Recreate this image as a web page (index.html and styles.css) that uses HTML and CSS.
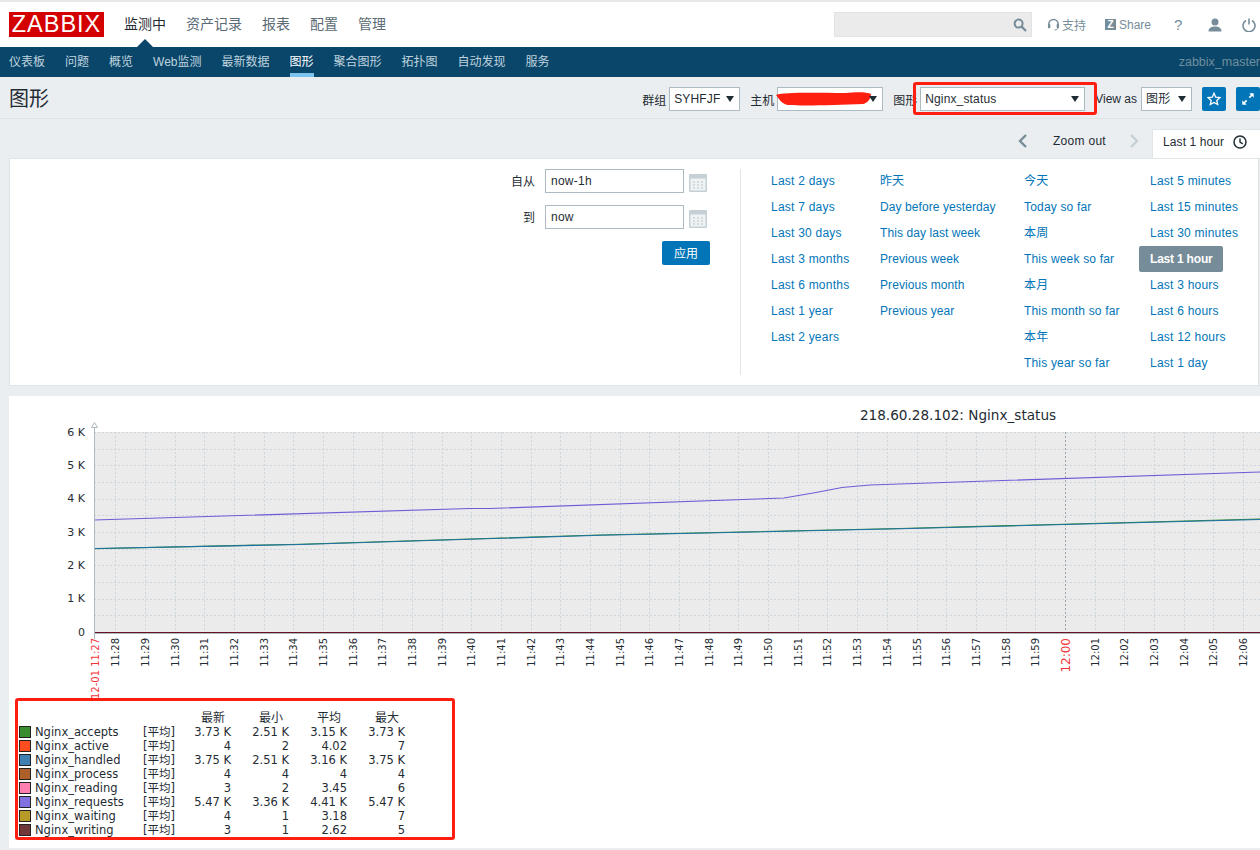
FILE: index.html
```html
<!DOCTYPE html>
<html lang="zh">
<head>
<meta charset="utf-8">
<title>图形</title>
<link rel="stylesheet" href="styles.css">
</head>
<body>
<header class="topbar">
  <div class="logo">ZABBIX</div>
  <nav class="mainmenu">
    <a class="active">监测中</a><a>资产记录</a><a>报表</a><a>配置</a><a>管理</a>
  </nav>
  <div class="search">
    <svg class="icon14" viewBox="0 0 14 14"><circle cx="5.6" cy="5.6" r="4" fill="none" stroke="#768d99" stroke-width="2"/><path d="M8.6 8.6l4.4 4.4" stroke="#768d99" stroke-width="2.2"/></svg>
  </div>
  <div class="tools">
    <span class="tool t-support"><svg class="icon13" viewBox="0 0 14 14"><path d="M2 9V6.500a5 5 0 0 1 10 0V9" fill="none" stroke="#768d99" stroke-width="1.600"/><rect x="1" y="6.500" width="2.600" height="4.500" rx="1" fill="#768d99"/><rect x="10.400" y="6.500" width="2.600" height="4.500" rx="1" fill="#768d99"/><path d="M11.500 11c0 1.300-1.500 1.800-3.500 1.800" fill="none" stroke="#768d99"/></svg>支持</span>
    <span class="tool t-share"><span class="zbadge">Z</span>Share</span>
    <span class="tool t-help">?</span>
    <svg class="icon14 t-user" viewBox="0 0 14 14"><circle cx="7" cy="4" r="3.500" fill="#768d99"/><path d="M0.500 13.500c0-3.500 2.500-5 6.500-5s6.500 1.500 6.500 5z" fill="#768d99"/></svg>
    <svg class="icon14 t-power" viewBox="0 0 14 14"><path d="M4 2.500a6 6 0 1 0 6 0" fill="none" stroke="#768d99" stroke-width="1.600"/><path d="M7 0.500v6" stroke="#768d99" stroke-width="1.600"/></svg>
  </div>
</header>

<nav class="submenu">
  <a>仪表板</a><a>问题</a><a>概览</a><a>Web监测</a><a>最新数据</a><a class="active">图形</a><a>聚合图形</a><a>拓扑图</a><a>自动发现</a><a>服务</a>
  <span class="server">zabbix_master</span>
</nav>

<section class="titlebar">
  <h1>图形</h1>
  <div class="controls">
    <label>群组</label>
    <div class="select s-group">SYHFJF</div>
    <label class="l-next">主机</label>
    <div class="select s-host"><svg class="redact" viewBox="0 0 96 14" preserveAspectRatio="none"><path d="M0 3 C8 0 40 1 70 1 C82 0 92 0 96 2 C96 6 93 11 88 12 C60 13 30 14 12 13 C6 12 3 7 0 3z" fill="#ff1f10"/></svg></div>
    <label class="l-next">图形</label>
    <div class="select s-graph">Nginx_status<span class="annotation"></span></div>
    <label class="l-view">View as</label>
    <div class="select s-view">图形</div>
    <button class="iconbtn b-star"><svg viewBox="0 0 16 16"><path d="M8 1.500l2 4.400 4.700.500-3.500 3.200 1 4.700L8 11.900l-4.200 2.400 1-4.700L1.300 6.400 6 5.900z" fill="none" stroke="#fff" stroke-width="1.500"/></svg></button>
    <button class="iconbtn b-full"><svg viewBox="0 0 16 16"><path d="M9.500 1.500h5v5l-1.800-1.800-2.500 2.500-1.400-1.400 2.500-2.500zM6.500 14.500h-5v-5l1.800 1.800 2.500-2.500 1.400 1.400-2.500 2.500z" fill="#fff"/></svg></button>
  </div>
</section>

<section class="timeline">
  <svg class="chev" viewBox="0 0 12 16"><path d="M9 2L3 8l6 6" fill="none" stroke="#768d99" stroke-width="2.400"/></svg>
  <span class="zoomout">Zoom out</span>
  <svg class="chev chev-off" viewBox="0 0 12 16"><path d="M3 2l6 6-6 6" fill="none" stroke="#c5cfd5" stroke-width="2.400"/></svg>
  <div class="tab">Last 1 hour
    <svg class="clock" viewBox="0 0 14 14"><circle cx="7" cy="7" r="6" fill="none" stroke="#1f2c33" stroke-width="1.500"/><path d="M7 3.500V7l2.800 1.800" fill="none" stroke="#1f2c33" stroke-width="1.400"/></svg>
  </div>
</section>

<section class="filter">
  <form class="dates">
    <label>自从</label>
    <div class="input">now-1h</div>
    <svg class="cal" viewBox="0 0 18 18"><rect width="18" height="18" rx="1" fill="#c5d0d6"/><rect x="1.500" y="4.500" width="15" height="12" fill="#f0f3f4"/><path d="M4 8h2M8 8h2M12 8h2M4 11h2M8 11h2M12 11h2M4 14h2M8 14h2M12 14h2" stroke="#b6c3ca"/></svg>
    <label>到</label>
    <div class="input">now</div>
    <svg class="cal" viewBox="0 0 18 18"><rect width="18" height="18" rx="1" fill="#c5d0d6"/><rect x="1.500" y="4.500" width="15" height="12" fill="#f0f3f4"/><path d="M4 8h2M8 8h2M12 8h2M4 11h2M8 11h2M12 11h2M4 14h2M8 14h2M12 14h2" stroke="#b6c3ca"/></svg>
    <button class="apply" type="button">应用</button>
  </form>
  <div class="ranges">
    <ul class="c1"><li>Last 2 days</li><li>Last 7 days</li><li>Last 30 days</li><li>Last 3 months</li><li>Last 6 months</li><li>Last 1 year</li><li>Last 2 years</li></ul>
    <ul class="c2"><li>昨天</li><li>Day before yesterday</li><li>This day last week</li><li>Previous week</li><li>Previous month</li><li>Previous year</li></ul>
    <ul class="c3"><li>今天</li><li>Today so far</li><li>本周</li><li>This week so far</li><li>本月</li><li>This month so far</li><li>本年</li><li>This year so far</li></ul>
    <ul class="c4"><li>Last 5 minutes</li><li>Last 15 minutes</li><li>Last 30 minutes</li><li class="selected">Last 1 hour</li><li>Last 3 hours</li><li>Last 6 hours</li><li>Last 12 hours</li><li>Last 1 day</li></ul>
  </div>
</section>

<section class="graph">
  <svg class="plot" viewBox="9 396 1251 302" width="1251" height="302">
    <text class="g-title" x="958" y="420" text-anchor="middle">218.60.28.102: Nginx_status</text>
    <rect x="94" y="432" width="1166" height="200" fill="#ebebeb"/>
    <path class="grid" d="M94 432.500H1260M94 449.500H1260M94 465.500H1260M94 482.500H1260M94 499.500H1260M94 515.500H1260M94 532.500H1260M94 549.500H1260M94 565.500H1260M94 582.500H1260M94 599.500H1260M94 615.500H1260"/>
    <path class="grid" d="M115.500 432V632M145.500 432V632M175.500 432V632M204.500 432V632M234.500 432V632M264.500 432V632M293.500 432V632M323.500 432V632M353.500 432V632M382.500 432V632M412.500 432V632M442.500 432V632M471.500 432V632M501.500 432V632M531.500 432V632M560.500 432V632M590.500 432V632M620.500 432V632M649.500 432V632M679.500 432V632M709.500 432V632M738.500 432V632M768.500 432V632M798.500 432V632M827.500 432V632M857.500 432V632M887.500 432V632M917.500 432V632M946.500 432V632M976.500 432V632M1006.500 432V632M1035.500 432V632M1095.500 432V632M1124.500 432V632M1154.500 432V632M1184.500 432V632M1213.500 432V632M1243.500 432V632"/>
    <path class="grid-major" d="M1065.500 432V632"/>
    <polyline class="l-requests" points="94,520 470,508.500 490,508.500 784,498 816,492.500 842,487.500 870,485 1260,472"/>
    <polyline class="l-accepts" points="94,548.700 300,544.200 600,535 900,528.500 1260,519"/>
    <polyline class="l-handled" points="94,548.500 300,544.500 600,535.300 900,528.800 1260,519.500"/>
    <path class="l-zero" d="M94 632.500H1260"/>
    <path class="axis" d="M94.500 425V639M94 633.500H1260"/>
    <path class="arrow" d="M94.500 422.500l3 5h-6z"/>
    <g class="ylabels" text-anchor="end">
      <text x="85" y="436">6 K</text><text x="85" y="469">5 K</text><text x="85" y="502">4 K</text><text x="85" y="536">3 K</text><text x="85" y="569">2 K</text><text x="85" y="602">1 K</text><text x="85" y="636">0</text>
    </g>
    <g class="xlabels" text-anchor="end">
      <text class="red" transform="translate(98.500 638) rotate(-90)">12-01 11:27</text>
      <text transform="translate(119 638) rotate(-90)">11:28</text><text transform="translate(148.500 638) rotate(-90)">11:29</text><text transform="translate(178.500 638) rotate(-90)">11:30</text><text transform="translate(208 638) rotate(-90)">11:31</text><text transform="translate(237.500 638) rotate(-90)">11:32</text><text transform="translate(267.500 638) rotate(-90)">11:33</text><text transform="translate(297 638) rotate(-90)">11:34</text><text transform="translate(326.500 638) rotate(-90)">11:35</text><text transform="translate(356.500 638) rotate(-90)">11:36</text><text transform="translate(386 638) rotate(-90)">11:37</text><text transform="translate(415.500 638) rotate(-90)">11:38</text><text transform="translate(445.500 638) rotate(-90)">11:39</text><text transform="translate(475 638) rotate(-90)">11:40</text><text transform="translate(504.500 638) rotate(-90)">11:41</text><text transform="translate(534.500 638) rotate(-90)">11:42</text><text transform="translate(564 638) rotate(-90)">11:43</text><text transform="translate(593.500 638) rotate(-90)">11:44</text><text transform="translate(623.500 638) rotate(-90)">11:45</text><text transform="translate(653 638) rotate(-90)">11:46</text><text transform="translate(682.500 638) rotate(-90)">11:47</text><text transform="translate(712.500 638) rotate(-90)">11:48</text><text transform="translate(742 638) rotate(-90)">11:49</text><text transform="translate(771.500 638) rotate(-90)">11:50</text><text transform="translate(801.500 638) rotate(-90)">11:51</text><text transform="translate(831 638) rotate(-90)">11:52</text><text transform="translate(860.500 638) rotate(-90)">11:53</text><text transform="translate(890.500 638) rotate(-90)">11:54</text><text transform="translate(920.500 638) rotate(-90)">11:55</text><text transform="translate(950 638) rotate(-90)">11:56</text><text transform="translate(979.500 638) rotate(-90)">11:57</text><text transform="translate(1009.500 638) rotate(-90)">11:58</text><text transform="translate(1039 638) rotate(-90)">11:59</text>
      <text class="red big" transform="translate(1069.500 638) rotate(-90)">12:00</text>
      <text transform="translate(1098.500 638) rotate(-90)">12:01</text><text transform="translate(1128 638) rotate(-90)">12:02</text><text transform="translate(1157.500 638) rotate(-90)">12:03</text><text transform="translate(1187.500 638) rotate(-90)">12:04</text><text transform="translate(1217 638) rotate(-90)">12:05</text><text transform="translate(1246.500 638) rotate(-90)">12:06</text>
    </g>
  </svg>
  <div class="legend">
    <div class="lrow lhead"><span></span><span></span><span></span><span>最新</span><span>最小</span><span>平均</span><span>最大</span></div>
    <div class="lrow"><i class="sw c-accepts"></i><span>Nginx_accepts</span><span>[平均]</span><span>3.73 K</span><span>2.51 K</span><span>3.15 K</span><span>3.73 K</span></div>
    <div class="lrow"><i class="sw c-active"></i><span>Nginx_active</span><span>[平均]</span><span>4</span><span>2</span><span>4.02</span><span>7</span></div>
    <div class="lrow"><i class="sw c-handled"></i><span>Nginx_handled</span><span>[平均]</span><span>3.75 K</span><span>2.51 K</span><span>3.16 K</span><span>3.75 K</span></div>
    <div class="lrow"><i class="sw c-process"></i><span>Nginx_process</span><span>[平均]</span><span>4</span><span>4</span><span>4</span><span>4</span></div>
    <div class="lrow"><i class="sw c-reading"></i><span>Nginx_reading</span><span>[平均]</span><span>3</span><span>2</span><span>3.45</span><span>6</span></div>
    <div class="lrow"><i class="sw c-requests"></i><span>Nginx_requests</span><span>[平均]</span><span>5.47 K</span><span>3.36 K</span><span>4.41 K</span><span>5.47 K</span></div>
    <div class="lrow"><i class="sw c-waiting"></i><span>Nginx_waiting</span><span>[平均]</span><span>4</span><span>1</span><span>3.18</span><span>7</span></div>
    <div class="lrow"><i class="sw c-writing"></i><span>Nginx_writing</span><span>[平均]</span><span>3</span><span>1</span><span>2.62</span><span>5</span></div>
  </div>
</section>
</body>
</html>
```
FILE: styles.css
```css
* { box-sizing: border-box; }
html, body { margin: 0; height: 850px; overflow: hidden; }
body {
  background: #ebeef0;
  color: #1f2c33;
  font-family: "Liberation Sans", "Noto Sans CJK SC", sans-serif;
  font-size: 12px;
}
a { text-decoration: none; }

/* top bar */
.topbar {
  height: 47px;
  background: #fff;
  border-top: 2px solid #e8e8e8;
  display: flex;
  align-items: center;
  padding-left: 9px;
  position: relative;
}
.logo {
  width: 95px;
  height: 25px;
  background: #d40000;
  color: #fff;
  font-size: 23.5px;
  line-height: 25px;
  text-align: center;
  letter-spacing: 1px;
  flex: none;
}
.mainmenu { display: flex; gap: 20px; margin-left: 20px; font-size: 14px; color: #5b6b75; height: 45px; align-items: center; position: relative; padding-bottom: 3px; }
.mainmenu .active { color: #1f2c33; position: relative; align-self: stretch; display: flex; align-items: center; }
.mainmenu .active::after {
  content: "";
  position: absolute;
  left: 13px;
  bottom: -3px;
  border-left: 8px solid transparent;
  border-right: 8px solid transparent;
  border-bottom: 8px solid #0a466a;
}
.search {
  margin-left: auto;
  width: 198px;
  height: 25px;
  background: #ebebeb;
  border: 1px solid #e3e3e3;
  display: flex;
  align-items: center;
  justify-content: flex-end;
  padding-right: 4px;
}
.icon14 { width: 14px; height: 14px; flex: none; }
.icon13 { width: 13px; height: 13px; flex: none; }
.tools { display: flex; align-items: center; color: #768d99; width: 228px; padding-left: 15px; }
.tool { display: flex; align-items: center; }
.t-support { gap: 2px; width: 58px; }
.zbadge { width: 11px; height: 11px; background: #768d99; color: #fff; font-size: 10px; font-weight: bold; line-height: 11px; text-align: center; margin-right: 3px; }
.t-share { width: 69px; }
.t-help { font-size: 15px; width: 34px; }
.t-user { margin-right: 20px; }

/* sub menu */
.submenu {
  height: 30px;
  background: #0a466a;
  display: flex;
  align-items: center;
  gap: 20px;
  padding-left: 9px;
  overflow: hidden;
  color: #bfd3de;
}
.submenu a { height: 30px; line-height: 30px; border-bottom: 4px solid transparent; }
.submenu a.active { color: #fff; border-bottom-color: #7cc3f0; }
.server { margin-left: auto; color: #6e8f9f; font-size: 12.5px; flex: none; }

/* title row */
.titlebar {
  height: 42px;
  border-bottom: 1px solid #dfe4e7;
  display: flex;
  align-items: center;
  justify-content: space-between;
  padding: 3px 0 0 9px;
}
h1 { margin: 0; font-size: 20px; font-weight: normal; line-height: 36px; }
.controls { display: flex; align-items: center; color: #1f2c33; }
.controls label { margin-right: 3px; }
.l-next { margin-left: 10px; }
.l-view { margin-left: 10px; }
.select {
  height: 24px;
  border: 1px solid #acbbc2;
  background: #fff;
  padding-left: 4px;
  line-height: 22px;
  position: relative;
  letter-spacing: 0.15px;
}
.select::after {
  content: "";
  position: absolute;
  right: 5px;
  top: 8px;
  border-left: 4px solid transparent;
  border-right: 4px solid transparent;
  border-top: 6px solid #1f2c33;
}
.s-group { width: 71px; }
.s-host { width: 106px; }
.s-graph { width: 165px; }
.s-view { width: 51px; margin-left: 1px; }
.redact { position: absolute; left: -2px; top: 4px; width: 95px; height: 14px; }
.annotation {
  position: absolute;
  left: -8px;
  right: -13px;
  top: -6px;
  bottom: -5px;
  border: 3px solid #ff1f10;
  border-radius: 3px;
  pointer-events: none;
}
.iconbtn {
  width: 24px;
  height: 24px;
  padding: 5px;
  border: 0;
  border-radius: 2px;
  background: #0275b8;
  display: block;
}
.iconbtn svg { display: block; width: 14px; height: 14px; }
.b-star { margin-left: 10px; }
.b-full { margin-left: 10px; }

/* time line tabs */
.timeline {
  height: 30px;
  margin-top: 9px;
  padding-top: 5px;
  display: flex;
  align-items: flex-start;
  justify-content: flex-end;
}
.chev { width: 12px; height: 16px; flex: none; }
.zoomout { margin: 0 22px 0 24px; line-height: 16px; letter-spacing: 0.3px; }
.chev-off { margin-right: 12px; }
.tab {
  width: 108px;
  height: 29px;
  margin-top: -4px;
  padding: 0 0 5px 10px;
  background: #fff;
  display: flex;
  align-items: center;
  gap: 9px;
  letter-spacing: 0.1px;
  border: 1px solid #dfe4e7;
  border-bottom: 0;
  border-right: 0;
}
.clock { width: 14px; height: 14px; }

/* filter */
.filter {
  margin: 0 1px 0 9px;
  height: 228px;
  background: #fff;
  border: 1px solid #dfe4e7;
  padding-top: 10px;
  display: flex;
  align-items: flex-start;
}
.dates {
  width: 731px;
  height: 206px;
  border-right: 1px solid #dfe4e7;
  padding-right: 30px;
  display: grid;
  grid-template-columns: 1fr 139px 26px;
  grid-auto-rows: 24px;
  row-gap: 12px;
  align-items: center;
  align-content: start;
}
.dates label { text-align: right; padding: 0 10px 2px 0; }
.input { height: 24px; border: 1px solid #acbbc2; padding-left: 5px; line-height: 22px; letter-spacing: 0.25px; }
.cal { width: 18px; height: 18px; margin-left: 5px; margin-top: 3px; }
.apply {
  grid-column: 1 / -1;
  justify-self: end;
  width: 48px;
  height: 24px;
  margin-top: -1px;
  border: 0;
  border-radius: 2px;
  background: #0275b8;
  color: #fff;
  font: inherit;
  padding: 0;
}
.ranges { display: flex; padding-left: 30px; margin-top: -1px; color: #0275b8; letter-spacing: 0.23px; }
.ranges ul { list-style: none; margin: 0; padding: 0; }
.ranges li { height: 26px; line-height: 26px; white-space: nowrap; }
.c1 { width: 109px; }
.ranges .c2 { width: 144px; letter-spacing: 0.08px; }
.ranges .c3 { width: 126px; letter-spacing: 0.18px; }
.ranges .selected {
  background: #768d99;
  color: #fff;
  margin-left: -11px;
  padding-left: 11px;
  width: 84px;
  border-radius: 2px;
  font-weight: bold;
  letter-spacing: -0.2px;
}

/* graph */
.graph {
  margin: 10px 0 0 9px;
  height: 452px;
  background: #fff;
}
.plot { display: block; overflow: visible; font-family: "DejaVu Sans", sans-serif; }
.g-title { font-size: 13.6px; fill: #1f2c33; }
.grid { fill: none; stroke: #cbd5db; stroke-width: 1; stroke-dasharray: 2 2; }
.grid-major { fill: none; stroke: #9aa5ab; stroke-width: 1; stroke-dasharray: 2 2; }
.axis { fill: none; stroke: #acbbc2; stroke-width: 1; }
.arrow { fill: #fff; stroke: #acbbc2; stroke-width: 1; }
.l-requests, .l-accepts, .l-handled { fill: none; stroke-width: 1.1; }
.l-requests { stroke: #6f5bd6; }
.l-accepts { stroke: #2f8b2f; }
.l-handled { stroke: #1f72a3; }
.l-zero { stroke: #6b1020; stroke-width: 1; }
.ylabels text { font-size: 11px; fill: #1f2c33; }
.xlabels text { font-size: 10px; fill: #1f2c33; }
.xlabels .red { fill: #f0353a; }
.xlabels .big { font-size: 12px; }

.legend {
  position: relative;
  width: 440px;
  height: 142px;
  margin-left: 6px;
  padding: 10px 0 0 1px;
  border: 3px solid #ff1f10;
  border-radius: 3px;
  background: #fff;
  font-family: "DejaVu Sans", "Noto Sans CJK SC", sans-serif;
  font-size: 11.5px;
  color: #1f2c33;
}
.lrow {
  display: grid;
  grid-template-columns: 16px 108px 40px 48px 58px 58px 58px;
  height: 14px;
  line-height: 14px;
  align-items: center;
}
.lrow span:nth-child(n+4) { text-align: right; white-space: nowrap; }
.lhead span { font-size: 12px; }
.lhead span:nth-child(n+4) { padding-right: 6px; }
.sw { display: block; width: 12px; height: 12px; border: 1px solid #222; }
.c-accepts { background: #388e2f; }
.c-active { background: #ff4d20; }
.c-handled { background: #4080b0; }
.c-process { background: #ad6029; }
.c-reading { background: #ff80b0; }
.c-requests { background: #8070e0; }
.c-waiting { background: #b89a28; }
.c-writing { background: #703838; }
```
